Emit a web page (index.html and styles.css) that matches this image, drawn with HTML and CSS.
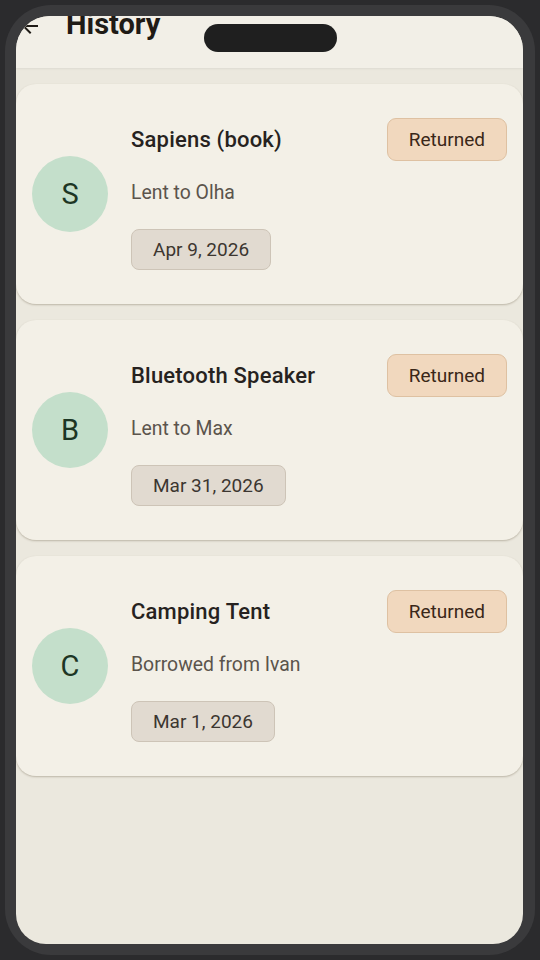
FILE: index.html
```html
<!DOCTYPE html>
<html lang="en">
<head>
    <meta charset="UTF-8">
    <meta name="viewport" content="width=device-width, initial-scale=1.0">
    <title>History</title>
    <link rel="stylesheet" href="styles.css">
</head>
<body>
    <div class="phone">
        <div class="notch"></div>
        <div class="screen">
            <header class="top-bar">
                <svg class="back" viewBox="0 0 24 24" width="24" height="24">
                    <path d="M20 11H7.83l5.59-5.59L12 4l-8 8 8 8 1.41-1.41L7.83 13H20v-2z" fill="#1f1b16"/>
                </svg>
                <h1>History</h1>
            </header>

            <div class="list">
                <div class="card">
                    <div class="avatar">S</div>
                    <div class="info">
                        <div class="row">
                            <span class="title">Sapiens (book)</span>
                            <span class="badge">Returned</span>
                        </div>
                        <div class="sub">Lent to Olha</div>
                        <span class="chip">Apr 9, 2026</span>
                    </div>
                </div>

                <div class="card">
                    <div class="avatar">B</div>
                    <div class="info">
                        <div class="row">
                            <span class="title">Bluetooth Speaker</span>
                            <span class="badge">Returned</span>
                        </div>
                        <div class="sub">Lent to Max</div>
                        <span class="chip">Mar 31, 2026</span>
                    </div>
                </div>

                <div class="card">
                    <div class="avatar">C</div>
                    <div class="info">
                        <div class="row">
                            <span class="title">Camping Tent</span>
                            <span class="badge">Returned</span>
                        </div>
                        <div class="sub">Borrowed from Ivan</div>
                        <span class="chip">Mar 1, 2026</span>
                    </div>
                </div>
            </div>
        </div>
    </div>
</body>
</html>
```

FILE: styles.css
```css
body {
    margin: 0;
    background: #2b2b2d;
    font-family: Roboto, "Noto Sans", sans-serif;
}
.phone {
    position: relative;
    margin: 5px;
    height: 950px;
    box-sizing: border-box;
    padding: 11px 12px 11px 11px;
    background: #3a3a3c;
    border-radius: 46px;
}
.notch {
    position: absolute;
    top: 19px;
    left: 199px;
    width: 133px;
    height: 28px;
    background: #1f1f1f;
    border-radius: 14px;
    z-index: 5;
}
.screen {
    height: 100%;
    background: #ebe8de;
    border-radius: 34px 34px 30px 30px;
    overflow: hidden;
    display: flex;
    flex-direction: column;
}
.top-bar {
    height: 52px;
    flex-shrink: 0;
    display: flex;
    align-items: flex-start;
    background: #f2efe7;
    box-shadow: 0 1px 2px rgba(0, 0, 0, 0.06);
}
.back {
    margin: -2px 0 0 2px;
    flex-shrink: 0;
}
.top-bar h1 {
    margin: -8px 0 0 24px;
    font-size: 29px;
    line-height: 33px;
    font-weight: 700;
    color: #1f1b16;
}
.list {
    display: flex;
    flex-direction: column;
    gap: 16px;
    padding-top: 16px;
}
.card {
    height: 220px;
    box-sizing: border-box;
    display: flex;
    align-items: center;
    gap: 23px;
    padding: 0 16px;
    background: #f3f0e7;
    border-radius: 20px;
    box-shadow: 0 1px 2px rgba(80, 65, 40, 0.3);
}
.avatar {
    width: 76px;
    height: 76px;
    flex-shrink: 0;
    border-radius: 50%;
    background: #c4dfcb;
    color: #1d3624;
    font-size: 29px;
    display: flex;
    align-items: center;
    justify-content: center;
}
.info {
    flex: 1;
    display: flex;
    flex-direction: column;
    align-items: flex-start;
}
.row {
    align-self: stretch;
    display: flex;
    justify-content: space-between;
    align-items: center;
}
.title {
    font-size: 22px;
    font-weight: 500;
    color: #262220;
    letter-spacing: 0.2px;
}
.badge {
    padding: 8px 21px;
    line-height: 25px;
    font-size: 19px;
    color: #3a2718;
    background: #f1d8be;
    border: 1px solid #dec1a2;
    border-radius: 9px;
}
.sub {
    margin-top: 20px;
    font-size: 19.4px;
    line-height: 24px;
    color: #5b544c;
}
.chip {
    margin-top: 24px;
    padding: 8px 21px;
    line-height: 23px;
    font-size: 19px;
    color: #3c3630;
    background: #e1dad0;
    border: 1px solid #cdc4b7;
    border-radius: 8px;
}
```
